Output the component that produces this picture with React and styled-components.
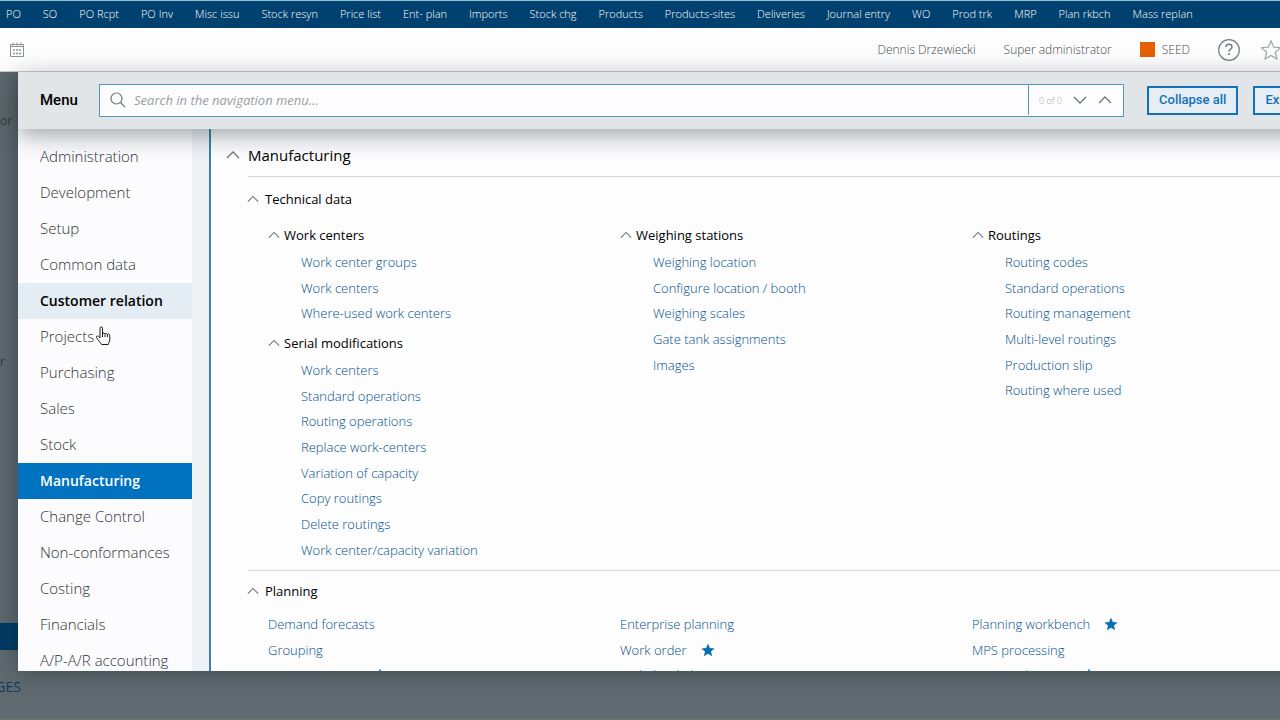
import React from "react";
import styled, { createGlobalStyle, css } from "styled-components";

const shortcuts = [
  "PO", "SO", "PO Rcpt", "PO Inv", "Misc issu", "Stock resyn", "Price list",
  "Ent- plan", "Imports", "Stock chg", "Products", "Products-sites",
  "Deliveries", "Journal entry", "WO", "Prod trk", "MRP", "Plan rkbch",
  "Mass replan"
];

const modules = [
  "Administration", "Development", "Setup", "Common data",
  "Customer relation", "Projects", "Purchasing", "Sales", "Stock",
  "Manufacturing", "Change Control", "Non-conformances", "Costing",
  "Financials", "A/P-A/R accounting"
];

const technicalData = [
  [
    {
      title: "Work centers",
      links: ["Work center groups", "Work centers", "Where-used work centers"]
    },
    {
      title: "Serial modifications",
      links: [
        "Work centers", "Standard operations", "Routing operations",
        "Replace work-centers", "Variation of capacity", "Copy routings",
        "Delete routings", "Work center/capacity variation"
      ]
    }
  ],
  [
    {
      title: "Weighing stations",
      links: [
        "Weighing location", "Configure location / booth", "Weighing scales",
        "Gate tank assignments", "Images"
      ]
    }
  ],
  [
    {
      title: "Routings",
      links: [
        "Routing codes", "Standard operations", "Routing management",
        "Multi-level routings", "Production slip", "Routing where used"
      ]
    }
  ]
];

const planning = [
  ["Demand forecasts", "Grouping", "MPS parameter"],
  ["Enterprise planning", "Work order", "Multi-level planning"],
  ["Planning workbench", "MPS processing", "Mass replanning"]
];

const favorites = [
  "MPS parameter", "Work order", "Planning workbench", "Mass replanning"
];

const STAR = "M12 1l3.2 7.6 8.3.7-6.3 5.4 1.9 8.1L12 18.5l-7.1 4.3 1.9-8.1L.5 9.3l8.3-.7z";

function Chevron({ down, size = 14 }) {
  return (
    <svg width={size} height={size} viewBox="0 0 14 14" fill="none" stroke="#6c767a" strokeWidth="1.3" aria-hidden="true">
      <path d={down ? "M1 4l6 6 6-6" : "M1 10l6-6 6 6"} />
    </svg>
  );
}

function Star({ size, outline }) {
  return (
    <svg width={size} height={size} viewBox="0 0 24 24" fill={outline ? "none" : "#0a6fb5"} stroke={outline ? "#a3aaad" : "none"} strokeWidth="1.5" aria-hidden="true">
      <path d={STAR} />
    </svg>
  );
}

function CalendarIcon() {
  return (
    <svg width="16" height="16" viewBox="0 0 16 16" fill="none" stroke="#8b9494" aria-hidden="true">
      <path d="M1.5 2.5h13v12h-13zM1.5 4.5h13M4 .5v3M8 .5v3M12 .5v3" />
      <path d="M4 8h2M7 8h2M10 8h2M4 11.5h2M7 11.5h2M10 11.5h2" strokeWidth="1.5" />
    </svg>
  );
}

function HelpIcon() {
  return (
    <svg width="22" height="22" viewBox="0 0 22 22" fill="none" stroke="#737d82" aria-hidden="true">
      <circle cx="11" cy="11" r="10.3" strokeWidth="1.2" />
      <path d="M8 8c0-1.8 1.3-2.7 3-2.7s3 1 3 2.6c0 2.3-3 2.2-3 4.8" strokeWidth="1.5" />
      <path d="M11 14.3v1.8" strokeWidth="1.7" />
    </svg>
  );
}

function SearchIcon() {
  return (
    <svg width="16" height="16" viewBox="0 0 16 16" fill="none" stroke="#6f777b" strokeWidth="1.2" aria-hidden="true">
      <circle cx="6.5" cy="6.5" r="5.5" />
      <path d="M10.5 10.5l4.7 4.7" />
    </svg>
  );
}

function HandPointer() {
  return (
    <Pointer width="16" height="20" viewBox="0 0 16 20" aria-hidden="true">
      <path
        d="M5 12V2.3C5 .4 7.5.4 7.5 2.3V8c.3-1.3 2.3-1.2 2.500.2.400-1.200 2.200-1 2.400.4.500-1 2.400-.8 2.400.8v4.300c0 2-1.300 3-1.600 4.800H6.600C5.600 16.500 3 14 1.600 11.700c-.9-1.500 1-2.400 2-1.200z"
        fill="#fff"
        stroke="#1c1c1c"
        strokeWidth="1"
      />
      <path d="M7.5 8v3M10 8.5V11M12.4 9v2" stroke="#1c1c1c" />
    </Pointer>
  );
}

function LinkList({ links }) {
  return (
    <Links>
      {links.map(link => (
        <li key={link}>
          <a href="#menu">{link}</a>
          {favorites.includes(link) && <Star size={14} />}
        </li>
      ))}
    </Links>
  );
}

function App() {
  return (
    <Page>
      <GlobalStyle />
      <ShortcutBar>
        {shortcuts.map(item => (
          <a href="#menu" key={item}>{item}</a>
        ))}
      </ShortcutBar>
      <Header>
        <IconButton aria-label="Calendar"><CalendarIcon /></IconButton>
        <Account>
          <span>Dennis Drzewiecki</span>
          <span>Super administrator</span>
          <Endpoint>SEED</Endpoint>
          <HeaderIcons>
            <IconButton aria-label="Help"><HelpIcon /></IconButton>
            <IconButton aria-label="Favorites"><Star size={20} outline /></IconButton>
          </HeaderIcons>
        </Account>
      </Header>
      <Workspace>
        <Behind>
          <span>or</span>
          <span>r</span>
          <BehindBar />
        </Behind>
        <Dialog>
          <Toolbar>
            <MenuLabel htmlFor="menu-search">Menu</MenuLabel>
            <SearchBox>
              <SearchIcon />
              <input id="menu-search" type="text" placeholder="Search in the navigation menu..." />
              <Matches>
                <small>0 of 0</small>
                <IconButton aria-label="Next match"><Chevron down /></IconButton>
                <IconButton aria-label="Previous match"><Chevron /></IconButton>
              </Matches>
            </SearchBox>
            <Actions>
              <OutlineButton>Collapse all</OutlineButton>
              <OutlineButton>Expand all</OutlineButton>
            </Actions>
          </Toolbar>
          <Body>
            <Sidebar>
              <ul>
                {modules.map(name => (
                  <ModuleItem
                    key={name}
                    $active={name === "Manufacturing"}
                    $hovered={name === "Customer relation"}
                  >
                    <a href="#menu">{name}</a>
                    {name === "Projects" && <HandPointer />}
                  </ModuleItem>
                ))}
              </ul>
            </Sidebar>
            <Content>
              <ModuleTitle><Chevron />Manufacturing</ModuleTitle>
              <Section>
                <SectionTitle><Chevron size={12} />Technical data</SectionTitle>
                <Columns $grouped>
                  {technicalData.map((groups, i) => (
                    <Column key={i}>
                      {groups.map(group => (
                        <Group key={group.title}>
                          <GroupTitle><Chevron size={12} />{group.title}</GroupTitle>
                          <LinkList links={group.links} />
                        </Group>
                      ))}
                    </Column>
                  ))}
                </Columns>
              </Section>
              <Section>
                <SectionTitle><Chevron size={12} />Planning</SectionTitle>
                <Columns>
                  {planning.map((links, i) => (
                    <LinkList key={i} links={links} />
                  ))}
                </Columns>
              </Section>
            </Content>
          </Body>
        </Dialog>
      </Workspace>
      <Footer><span>GES</span></Footer>
    </Page>
  );
}

const GlobalStyle = createGlobalStyle`
  * {
    box-sizing: border-box;
  }

  body {
    margin: 0;
    font-family: "Open Sans", sans-serif;
    font-size: 13px;
    color: #000;
  }

  ul {
    margin: 0;
    padding: 0;
    list-style: none;
  }

  a {
    color: inherit;
    text-decoration: none;
  }

  svg {
    display: block;
    flex: none;
  }
`;

const Page = styled.div`
  height: 100vh;
  display: flex;
  flex-direction: column;
  overflow: hidden;
  background: #5f6b70;
`;

const ShortcutBar = styled.nav`
  flex: none;
  height: 28px;
  display: flex;
  align-items: center;
  gap: 22px;
  padding: 0 0 2px 6px;
  border-top: 1px solid #8fc3d4;
  background: #00416f;
  color: #fff;
  font-size: 11px;
  font-weight: 300;
  white-space: nowrap;
`;

const Header = styled.header`
  flex: none;
  position: relative;
  z-index: 1;
  height: 44px;
  display: flex;
  align-items: center;
  justify-content: space-between;
  padding-left: 9px;
  border-bottom: 1px solid #c6cccd;
  background: #fdfdfe;
  color: #42494d;
  font-size: 12px;
  font-weight: 300;
`;

const Account = styled.div`
  display: flex;
  align-items: center;
  gap: 28px;
  margin-right: -1px;
  white-space: nowrap;
`;

const Endpoint = styled.span`
  display: flex;
  align-items: center;
  gap: 7px;

  &::before {
    content: "";
    width: 15px;
    height: 15px;
    background: #e65f00;
  }
`;

const HeaderIcons = styled.div`
  display: flex;
  align-items: center;
  gap: 21px;
`;

const IconButton = styled.button`
  padding: 0;
  border: 0;
  background: none;
`;

const Workspace = styled.main`
  flex: 1;
  min-height: 0;
  display: flex;
`;

const Behind = styled.div`
  flex: none;
  width: 18px;
  display: flex;
  flex-direction: column;
  align-items: flex-start;
  padding-top: 40px;
  gap: 223px;
  color: #2f383c;
  font-size: 12px;
  line-height: 18px;
`;

const BehindBar = styled.div`
  width: 100%;
  height: 27px;
  margin-top: 29px;
  background: #003a66;
`;

const Dialog = styled.section`
  flex: 1;
  min-width: 0;
  margin-right: -64px;
  display: flex;
  flex-direction: column;
  background: #fdfdfe;
  box-shadow: 0 0 24px rgba(20, 35, 42, 0.5);
`;

const Toolbar = styled.div`
  flex: none;
  position: relative;
  z-index: 1;
  height: 57px;
  display: flex;
  align-items: center;
  padding: 0 7px 0 22px;
  background: #e1e5e8;
  box-shadow: 0 6px 24px rgba(40, 50, 55, 0.45);
`;

const MenuLabel = styled.label`
  width: 59px;
  padding-bottom: 2px;
  font-family: Roboto, sans-serif;
  font-size: 15px;
  font-weight: 500;
`;

const SearchBox = styled.div`
  flex: 1;
  height: 33px;
  display: flex;
  align-items: center;
  padding: 0 0 1px 10px;
  border: 1px solid #4f9ab8;
  background: #fdfdff;

  input {
    flex: 1;
    min-width: 0;
    padding: 0 8px;
    border: 0;
    outline: 0;
    background: none;
    font: inherit;
  }

  input::placeholder {
    color: #9a9da0;
    font-style: italic;
  }
`;

const Matches = styled.div`
  width: 95px;
  height: 100%;
  display: flex;
  align-items: center;
  gap: 11px;
  padding-left: 10px;
  border-left: 1px solid #4f9ab8;
  color: #a4a7a9;

  small {
    font-size: 9px;
    font-weight: 300;
  }
`;

const Actions = styled.div`
  display: flex;
  gap: 15px;
  margin-left: 23px;
`;

const OutlineButton = styled.button`
  height: 29px;
  padding: 0 10px 2px;
  border: 2px solid #1271b9;
  background: #e6edf3;
  color: #1271b9;
  font-family: Roboto, sans-serif;
  font-size: 13px;
  font-weight: 500;
  white-space: nowrap;
`;

const Body = styled.div`
  flex: 1;
  min-height: 0;
  display: flex;
`;

const Sidebar = styled.nav`
  flex: none;
  width: 193px;
  padding: 10px 17px 0 0;
  overflow: hidden;
  border-right: 2px solid #3b7fae;
  background: linear-gradient(to left, #eef2f5 17px, #fcfcfe 17px);
`;

const ModuleItem = styled.li`
  position: relative;
  height: 36px;
  padding-left: 22px;
  color: #2f3336;
  font-size: 15px;
  font-weight: 300;
  line-height: 35px;
  white-space: nowrap;

  ${({ $hovered }) =>
    $hovered &&
    css`
      background: #e5edf4;
      color: #000;
      font-size: 14px;
      font-weight: 600;
      line-height: 36px;
    `}

  ${({ $active }) =>
    $active &&
    css`
      background: #0072bf;
      color: #fff;
      font-size: 14px;
      font-weight: 600;
      line-height: 36px;
    `}
`;

const Pointer = styled.svg`
  position: absolute;
  top: 7px;
  left: 77px;
`;

const Content = styled.div`
  flex: 1;
  min-width: 0;
  padding: 11px 20px 0 37px;
  overflow: hidden;
`;

const ModuleTitle = styled.h1`
  display: flex;
  align-items: center;
  gap: 8px;
  height: 37px;
  margin: 0 0 2px -22px;
  padding-bottom: 8px;
  font-size: 15px;
  font-weight: 400;
  background: linear-gradient(#d5d8da, #d5d8da) 22px 100% / 100% 1px no-repeat;
`;

const Section = styled.section`
  & + & {
    border-top: 1px solid #d5d8da;
  }
`;

const SectionTitle = styled.h2`
  display: flex;
  align-items: center;
  gap: 6px;
  height: 40px;
  margin: 0 0 0 -1px;
  font-size: 13px;
  font-weight: 400;
`;

const Columns = styled.div`
  display: grid;
  grid-template-columns: repeat(3, 1fr);
  padding: ${({ $grouped }) => ($grouped ? "2px 0 8px 20px" : "0 0 0 20px")};
`;

const Column = styled.div`
  display: flex;
  flex-direction: column;
  gap: 3px;
`;

const Links = styled.ul`
  color: #00508c;
  font-weight: 300;

  li {
    display: flex;
    align-items: center;
    gap: 14px;
    height: 26px;
    white-space: nowrap;
  }

  li:nth-child(3n + 2) {
    height: 25px;
  }
`;

const Group = styled.div`
  ${Links} {
    padding-left: 33px;
  }
`;

const GroupTitle = styled.h3`
  display: flex;
  align-items: center;
  gap: 4px;
  height: 28px;
  margin: 0;
  font-size: 13px;
  font-weight: 400;
`;

const Footer = styled.footer`
  flex: none;
  height: 49px;
  display: flex;
  align-items: flex-start;
  padding-top: 6px;
  border-bottom: 1px solid #6b7a68;
  color: #123a5c;
  font-size: 14px;
  line-height: 20px;

  span {
    display: flex;
    justify-content: flex-end;
    width: 21px;
  }
`;

export default App;
